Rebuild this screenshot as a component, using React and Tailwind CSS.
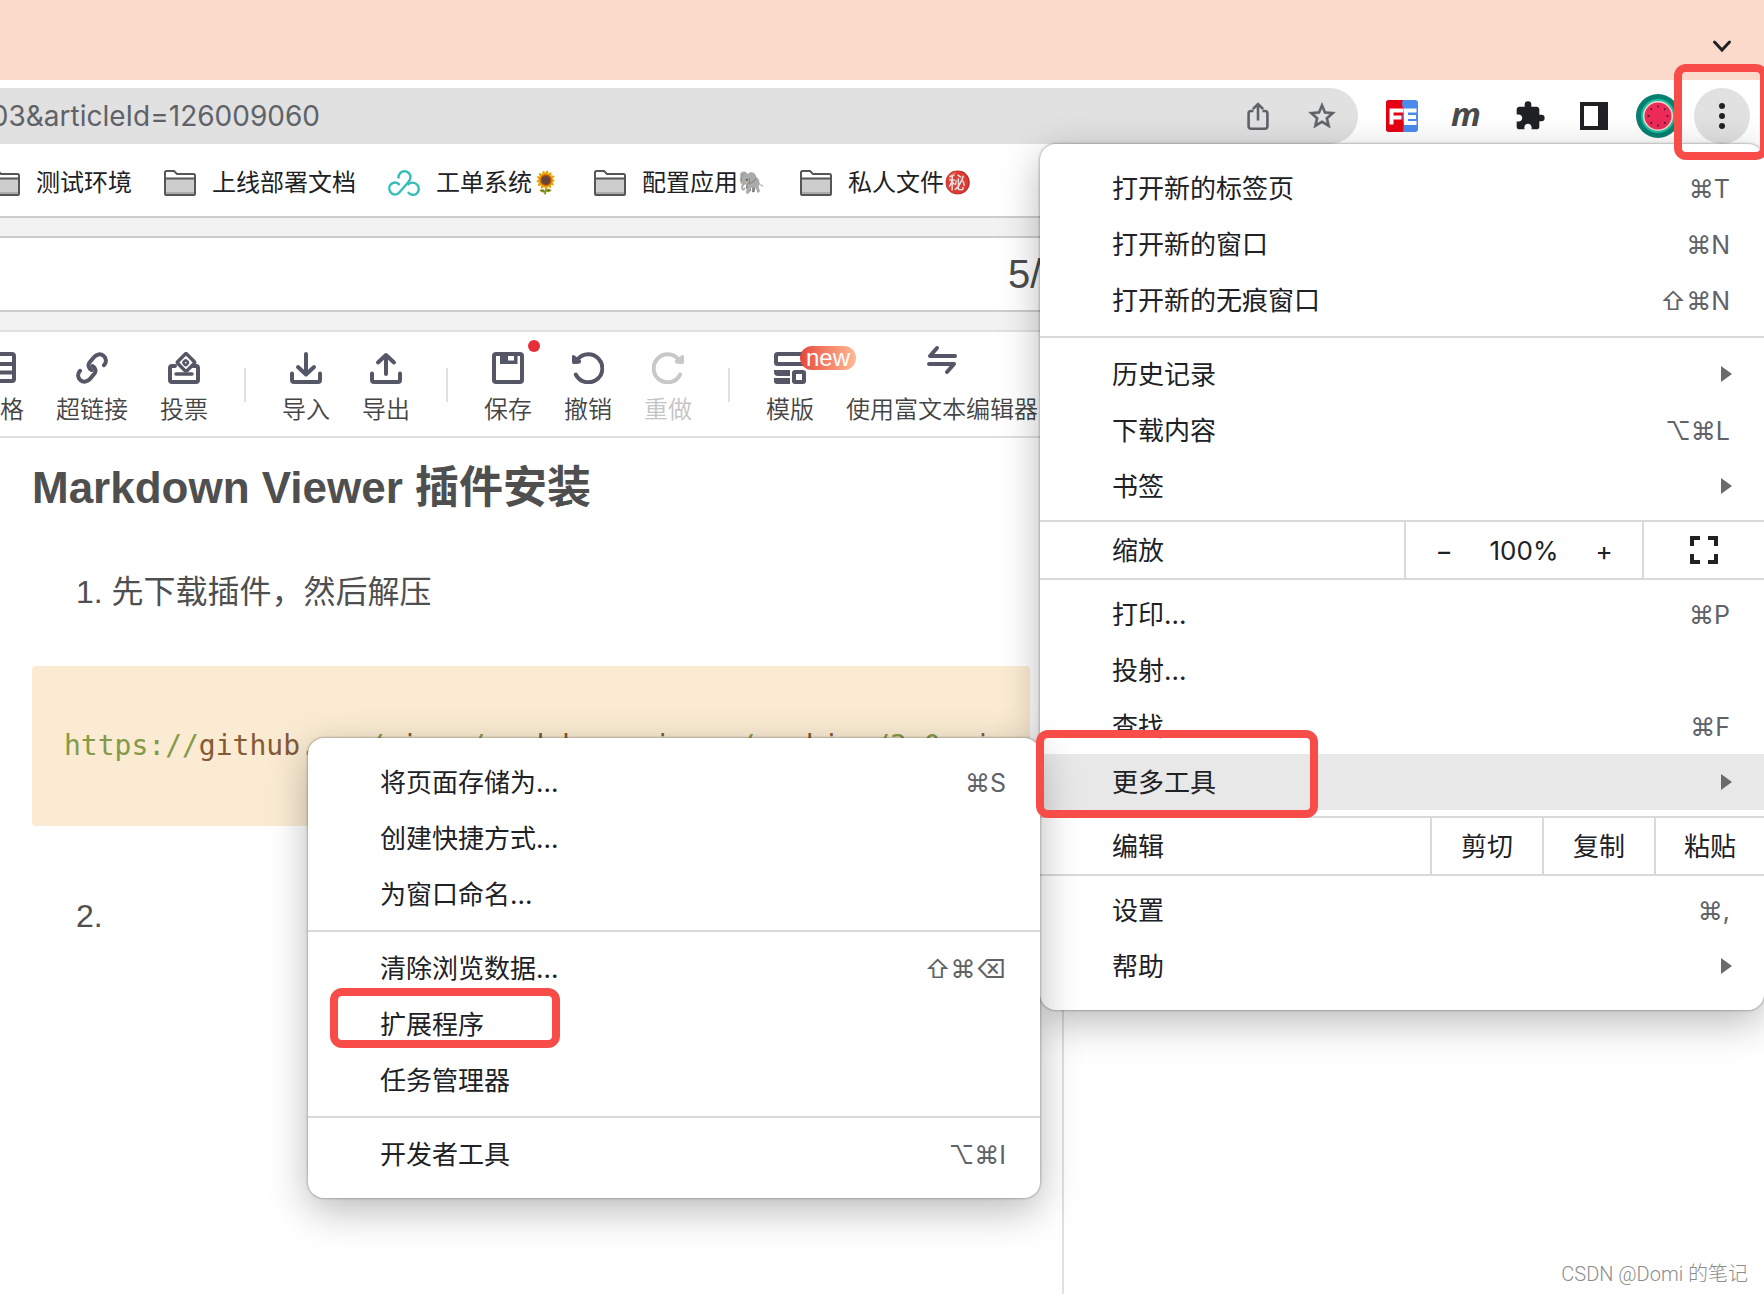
import React from "react";

const ui = "font-['Inter','Noto_Sans_CJK_SC',sans-serif]";
const article = "font-['Liberation_Sans','Noto_Sans_CJK_SC',sans-serif]";

/* ---------- browser icons ---------- */

function ShareIcon() {
  return (
    <svg viewBox="0 0 32 32" className="size-8" fill="none" stroke="currentColor" strokeWidth="2.6">
      <path d="M11.5 11H9a2.4 2.4 0 0 0-2.4 2.4v13A2.4 2.4 0 0 0 9 28.8h14a2.4 2.4 0 0 0 2.4-2.4v-13A2.4 2.4 0 0 0 23 11h-2.500" />
      <path d="M16 20.500V4.500M10.800 9.200L16 4l5.200 5.200" />
    </svg>
  );
}

function StarIcon() {
  return (
    <svg viewBox="0 0 24 24" className="size-8" fill="currentColor" stroke="currentColor" strokeWidth="0.4">
      <path d="M22 9.240l-7.190-.62L12 2 9.190 8.630 2 9.240l5.460 4.730L5.820 21 12 17.270 18.180 21l-1.630-7.030L22 9.240zM12 15.400l-3.760 2.270 1-4.280-3.320-2.880 4.380-.38L12 6.100l1.710 4.040 4.380.38-3.320 2.880 1 4.280L12 15.400z" />
    </svg>
  );
}

function FeIcon() {
  return (
    <svg viewBox="0 0 32 32" className="size-8">
      <rect width="32" height="32" rx="3" fill="#4a8bec" />
      <path d="M3 0h14c-3 5 2 8 0 13s2 9 0 19H3a3 3 0 0 1-3-3V3a3 3 0 0 1 3-3z" fill="#e60012" />
      <path d="M5.500 24.500V10.500h12M5.500 17.500h10M30.500 10.500H20v12.500h10.500M20 17h10" fill="none" stroke="#fff" strokeWidth="4" />
    </svg>
  );
}

function PuzzleIcon() {
  return (
    <svg viewBox="0 0 24 24" className="size-8" fill="#202124">
      <path d="M20.500 11H19V7c0-1.100-.9-2-2-2h-4V3.500a2.500 2.500 0 0 0-5 0V5H4c-1.100 0-1.990.9-1.990 2v3.800H3.500c1.490 0 2.700 1.210 2.700 2.700s-1.210 2.700-2.700 2.700H2V20c0 1.100.9 2 2 2h3.800v-1.500c0-1.490 1.210-2.700 2.700-2.700 1.490 0 2.700 1.210 2.700 2.700V22H17c1.100 0 2-.9 2-2v-4h1.500a2.500 2.500 0 0 0 0-5z" />
    </svg>
  );
}

function SidePanelIcon() {
  return (
    <svg viewBox="0 0 32 32" className="size-8">
      <path d="M2 2h28v28H2z" fill="#202124" />
      <path d="M6 6h14v20H6z" fill="#fff" />
    </svg>
  );
}

function Watermelon() {
  const seeds = [0, 45, 90, 135, 180, 225, 270, 315];
  return (
    <svg viewBox="0 0 44 44" className="size-11">
      <circle cx="22" cy="22" r="22" fill="#078071" />
      <circle cx="22" cy="22" r="17" fill="#1cc09f" />
      <circle cx="22" cy="22" r="15" fill="#f6d3d0" />
      <circle cx="22" cy="22" r="13.500" fill="#ee2a58" />
      {seeds.map((a) => (
        <circle key={a} cx="22" cy="12.500" r="1" fill="#40202a" transform={`rotate(${a} 22 22)`} />
      ))}
    </svg>
  );
}

function Folder() {
  return (
    <svg viewBox="0 0 32 26" className="h-[26px] w-8 shrink-0">
      <path d="M1 24V2.500Q1 1 2.500 1H10l3 3h17.500V24q0 1-1 1H2q-1 0-1-1z" fill="#fff" />
      <path d="M1 8.500h30V25H1z" fill="#cdcdcd" />
      <path d="M2 22h28v2H2z" fill="#ababab" />
      <path d="M1 24V2.500Q1 1 2.500 1H10l3 3h16.500Q31 4 31 5.500V24q0 1-1 1H2q-1 0-1-1zM1 8.500h30" fill="none" stroke="#565656" strokeWidth="2" />
    </svg>
  );
}

function Cloud() {
  return (
    <svg viewBox="0 0 32 26" className="h-[26px] w-8 shrink-0" fill="none" stroke="#35bdb8" strokeWidth="2.400" strokeLinecap="round">
      <path d="M10.500 7.500C10.500 4 13 1.300 16.500 1.300S22.500 4 22.500 7.200c0 2.300-1 3.600-2.500 5.300l-8.500 9.800C9 25.500 5 25.300 2.800 22.500.6 19.600.9 16 3.200 14c2.600-2.300 6-1.900 7.800.3" />
      <path d="M20.500 14.300c2.200-2.400 6.300-2.200 8.700.4 2.200 2.600 2.100 6.400-.3 8.600-2.500 2.200-6.200 2-8.400-.5" />
    </svg>
  );
}

/* ---------- editor icons ---------- */

function ToolSvg({ children, tall }) {
  return (
    <svg
      viewBox={tall ? "0 0 32 40" : "0 0 32 32"}
      className={tall ? "h-10 w-8" : "size-8"}
      fill="none"
      stroke="currentColor"
      strokeWidth="4"
      strokeLinecap="round"
      strokeLinejoin="round"
    >
      {children}
    </svg>
  );
}

const TableIcon = () => (
  <ToolSvg>
    <rect x="2" y="2" width="28" height="27" rx="2" />
    <path d="M2 12h28M2 20.500h28M12 12v17" />
  </ToolSvg>
);
const LinkIcon = () => (
  <ToolSvg>
    <path d="M15.500 18c-3-1.500-4-5-1.800-7.800l4.200-5C20.200 2.200 24.500 1.300 27.500 3.800s3.200 6.500.5 9.400" />
    <path d="M15.500 18c-3-1.500-4-5-1.800-7.800l4.200-5C20.200 2.200 24.500 1.300 27.500 3.800s3.200 6.500.5 9.400" transform="rotate(180 16 16)" />
  </ToolSvg>
);
const VoteIcon = () => (
  <ToolSvg>
    <path d="M7 14H4a2 2 0 0 0-2 2v12a2 2 0 0 0 2 2h24a2 2 0 0 0 2-2V16a2 2 0 0 0-2-2h-3" />
    <rect x="11.500" y="4" width="13" height="13" rx="1.500" transform="rotate(45 18 10.500)" fill="#fff" strokeWidth="3.500" />
    <rect x="15.700" y="8.700" width="4" height="4" rx="1" transform="rotate(45 17.700 10.700)" strokeWidth="2.500" />
    <path d="M8 22h16" strokeWidth="3.500" />
  </ToolSvg>
);
const ImportIcon = () => (
  <ToolSvg>
    <path d="M16 2v20M8 15l8 7.500 8-7.500M2 21.500V28a2 2 0 0 0 2 2h24a2 2 0 0 0 2-2v-6.500" />
  </ToolSvg>
);
const ExportIcon = () => (
  <ToolSvg>
    <path d="M16 22V3.500M8 10.500L16 3l8 7.500M2 21.500V28a2 2 0 0 0 2 2h24a2 2 0 0 0 2-2v-6.500" />
  </ToolSvg>
);
const SaveIcon = () => (
  <ToolSvg>
    <rect x="2" y="2" width="28" height="28" rx="2" />
    <path d="M8 1h17.500v11H8z" fill="currentColor" stroke="none" />
    <path d="M16 4h6v4.500h-6z" fill="#fff" stroke="none" />
  </ToolSvg>
);
const undoShape = (
  <>
    <path d="M3.800 22.500A14 14 0 1 0 5.500 7.500" />
    <path d="M0 4.500C0 3 1.500 2.500 2.500 3.500L8 7.500c2 1.500 1 4-1 4.200L2 12C.8 12 0 11.500 0 10z" fill="currentColor" stroke="none" />
  </>
);
const UndoIcon = () => <ToolSvg>{undoShape}</ToolSvg>;
const RedoIcon = () => (
  <ToolSvg>
    <g transform="matrix(-1 0 0 1 32 0)">{undoShape}</g>
  </ToolSvg>
);
const TemplateIcon = () => (
  <ToolSvg>
    <rect x="2" y="2" width="28" height="10" rx="1.500" />
    <path d="M0 18h16v6H4q-4 0-4-4zM0 26h16v6H3q-3 0-3-3z" fill="currentColor" stroke="none" />
    <rect x="20" y="20" width="10" height="10" rx="1" />
  </ToolSvg>
);
const SwapIcon = () => (
  <ToolSvg tall>
    <path d="M29 12H4l7-8M3 20h25l-7 8" />
  </ToolSvg>
);

/* ---------- pieces ---------- */

function Frame({ className }) {
  return <span aria-hidden="true" className={`pointer-events-none absolute rounded-xl border-8 border-[#f74c47] ${className}`} />;
}

function Bookmark({ icon, label, emoji }) {
  return (
    <a href="#bookmark" className="flex shrink-0 items-center gap-4">
      {icon}
      <span className="flex items-center whitespace-nowrap">
        {label}
        {emoji && <span className="w-[30px] text-[22px] brightness-90">{emoji}</span>}
      </span>
    </a>
  );
}

function Tool({ icon, label, disabled, children }) {
  return (
    <button
      type="button"
      disabled={disabled}
      className={`relative flex shrink-0 flex-col items-center gap-[10px] ${disabled ? "text-[#c8c8cb]" : "text-[#555666]"}`}
    >
      {icon}
      <span className={`text-2xl/8 font-[350] whitespace-nowrap ${disabled ? "text-[#c4c4c4]" : "text-[#444444]"}`}>{label}</span>
      {children}
    </button>
  );
}

const Divider = () => <span className="mx-1 mb-6 h-[34px] w-[2px] shrink-0 bg-[#e0e0e0]" />;

function Item({ label, keys, arrow, active, children }) {
  return (
    <div className="relative">
      <button
        type="button"
        role="menuitem"
        className={`flex h-14 w-full items-center justify-between pr-8 pl-[72px] text-left ${active ? "bg-[#e8e8e8]" : ""}`}
      >
        <span>{label}</span>
        {keys && <span className="pt-[3px] pr-[2px] font-['Inter','DejaVu_Sans',sans-serif] text-[25px] text-[#5f6368]">{keys}</span>}
        {arrow && (
          <svg viewBox="0 0 12 16" className="h-4 w-3" fill="#6b6b6b">
            <path d="M1 0l11 8-11 8z" />
          </svg>
        )}
      </button>
      {children}
    </div>
  );
}

const Rule = () => <hr className="my-2 border-0 border-t-2 border-[#d9d9d9]" />;

const panel =
  "rounded-2xl bg-white py-4 text-[26px] text-[#202124] shadow-[0_12px_40px_rgba(0,0,0,0.28),0_0_2px_1px_rgba(0,0,0,0.22)]";

function MoreToolsMenu() {
  return (
    <div role="menu" aria-label="更多工具" className={`absolute -top-4 right-full w-[732px] ${panel}`}>
      <Item label="将页面存储为..." keys="⌘S" />
      <Item label="创建快捷方式..." />
      <Item label="为窗口命名..." />
      <Rule />
      <Item label="清除浏览数据..." keys="⇧⌘⌫" />
      <Item label="扩展程序">
        <Frame className="-top-2 left-[22px] h-[60px] w-[230px]" />
      </Item>
      <Item label="任务管理器" />
      <Rule />
      <Item label="开发者工具" keys="⌥⌘I" />
    </div>
  );
}

function MainMenu() {
  const cell = "border-l-2 border-[#d9d9d9] flex items-center justify-center";
  const row = "my-[6px] flex h-[60px] border-y-2 border-[#d9d9d9] pl-[72px]";
  return (
    <div role="menu" aria-label="菜单" className={`absolute top-36 right-0 z-20 w-[724px] ${panel}`}>
      <Item label="打开新的标签页" keys="⌘T" />
      <Item label="打开新的窗口" keys="⌘N" />
      <Item label="打开新的无痕窗口" keys="⇧⌘N" />
      <Rule />
      <Item label="历史记录" arrow />
      <Item label="下载内容" keys="⌥⌘L" />
      <Item label="书签" arrow />
      <div className={row}>
        <span className="flex flex-1 items-center">缩放</span>
        <div className={`${cell} w-[238px]`}>
          <button type="button" aria-label="缩小" className="w-12">−</button>
          <span className="w-28 text-center">100%</span>
          <button type="button" aria-label="放大" className="w-12">+</button>
        </div>
        <button type="button" aria-label="全屏" className={`${cell} w-[122px]`}>
          <svg viewBox="0 0 28 28" className="size-7" fill="none" stroke="#202124" strokeWidth="4">
            <path d="M2 10V2h8M18 2h8v8M26 18v8h-8M10 26H2v-8" />
          </svg>
        </button>
      </div>
      <Item label="打印..." keys="⌘P" />
      <Item label="投射..." />
      <Item label="查找..." keys="⌘F" />
      <Item label="更多工具" arrow active>
        <MoreToolsMenu />
        <Frame className="-top-6 -left-1 h-[88px] w-[282px]" />
      </Item>
      <div className={row}>
        <span className="flex flex-1 items-center">编辑</span>
        <button type="button" className={`${cell} w-28`}>剪切</button>
        <button type="button" className={`${cell} w-28`}>复制</button>
        <button type="button" className={`${cell} w-[110px]`}>粘贴</button>
      </div>
      <Item label="设置" keys="⌘," />
      <Item label="帮助" arrow />
    </div>
  );
}

export default function App() {
  return (
    <div lang="zh-CN" className={`relative flex min-h-screen flex-col overflow-hidden bg-white ${ui}`}>
      <header className="flex h-20 items-center justify-end bg-[#fbdacb] pt-3 pr-[30px]">
        <button type="button" aria-label="搜索标签页">
          <svg viewBox="0 0 24 24" className="size-6" fill="none" stroke="#202124" strokeWidth="3" strokeLinecap="round">
            <path d="M4.500 8l7.500 8 7.500-8" />
          </svg>
        </button>
      </header>

      <div className="flex h-16 items-end pr-[14px]">
        <div className="flex h-14 flex-1 items-center gap-8 rounded-r-full bg-[#e1e1e1] pr-5 text-[#5f6368]">
          <div className="flex w-80 justify-end overflow-hidden text-[28px] whitespace-nowrap">03&amp;articleId=126009060</div>
          <button type="button" aria-label="分享" className="ml-auto"><ShareIcon /></button>
          <button type="button" aria-label="收藏"><StarIcon /></button>
        </div>
        <div className="flex h-14 items-center gap-8 pl-7">
          <button type="button" aria-label="FeHelper"><FeIcon /></button>
          <button type="button" className="w-8 pb-1 font-['Open_Sans',sans-serif] text-[33px]/8 font-bold text-[#4a4a4a] italic">m</button>
          <button type="button" aria-label="扩展程序"><PuzzleIcon /></button>
          <button type="button" aria-label="侧边栏"><SidePanelIcon /></button>
        </div>
        <button type="button" aria-label="个人资料" className="mb-[6px] ml-[26px]"><Watermelon /></button>
        <div className="relative ml-[14px] size-14">
          <button type="button" aria-label="更多" className="flex size-14 items-center justify-center rounded-full bg-[#e1e1e1]">
            <svg viewBox="0 0 8 28" className="h-7 w-2" fill="#202124">
              <circle cx="4" cy="4" r="3" />
              <circle cx="4" cy="14" r="3" />
              <circle cx="4" cy="24" r="3" />
            </svg>
          </button>
          <Frame className="-top-6 -left-5 z-30 h-24 w-[94px]" />
        </div>
      </div>

      <nav className="-ml-3 flex h-[74px] items-center gap-8 border-b-2 border-[#cccccc] pt-[6px] text-2xl text-[#202124]">
        <Bookmark icon={<Folder />} label="测试环境" />
        <Bookmark icon={<Folder />} label="上线部署文档" />
        <Bookmark icon={<Cloud />} label="工单系统" emoji="🌻" />
        <Bookmark icon={<Folder />} label="配置应用" emoji="🐘" />
        <Bookmark icon={<Folder />} label="私人文件" emoji="㊙️" />
      </nav>

      <div className="bg-[#f2f2f2] py-[18px]">
        <div className={`flex h-[76px] items-center border-y-2 border-[#cccccc] bg-white text-[40px] text-[#4d4d4d] ${article}`}>
          <input aria-label="文章标题" className="h-full w-[1008px] shrink-0 outline-none" />
          <span>5/100</span>
        </div>
      </div>

      <div className="-ml-6 flex h-[108px] items-end gap-8 border-y-2 border-[#e0e0e0] pb-[10px]">
        <Tool icon={<TableIcon />} label="表格" />
        <Tool icon={<LinkIcon />} label="超链接" />
        <Tool icon={<VoteIcon />} label="投票" />
        <Divider />
        <Tool icon={<ImportIcon />} label="导入" />
        <Tool icon={<ExportIcon />} label="导出" />
        <Divider />
        <Tool icon={<SaveIcon />} label="保存">
          <span className="absolute -top-3 -right-2 size-3 rounded-full bg-[#e62d38]" />
        </Tool>
        <Tool icon={<UndoIcon />} label="撤销" />
        <Tool icon={<RedoIcon />} label="重做" disabled />
        <Divider />
        <Tool icon={<TemplateIcon />} label="模版">
          <span className="absolute -top-[6px] left-[34px] h-6 w-14 rounded-full bg-linear-to-r from-[#e5453c] to-[#ffb995] text-center font-['Liberation_Sans',sans-serif] text-2xl/6 text-white">
            new
          </span>
        </Tool>
        <Tool icon={<SwapIcon />} label="使用富文本编辑器" />
      </div>

      <main className={`flex flex-1 ${article}`}>
        <section className="w-[60.3%] border-r-2 border-[#e0e0e0] px-8 pt-[18px] text-[#4f4f4f]">
          <h2 className="text-[44px]/[64px] font-bold">Markdown Viewer 插件安装</h2>
          <p className="mt-12 pl-11 text-[32px]/[48px]">1. 先下载插件，然后解压</p>
          <pre className="mt-[50px] overflow-hidden rounded bg-[#faebd2] px-8 py-14 font-['DejaVu_Sans_Mono',monospace] text-[28px]/[48px] text-[#855a36]">
            <span className="text-[#859a48]">https://</span>github<span className="text-[#999999]">.</span>com
            <span className="text-[#859a48]">/</span>simov<span className="text-[#859a48]">/</span>markdown
            <span className="text-[#999999]">-</span>viewer<span className="text-[#859a48]">/</span>archive
            <span className="text-[#859a48]">/3.0</span>
            <span className="text-[#999999]">.</span>zip
          </pre>
          <p className="mt-[66px] pl-11 text-[32px]/[48px]">2.</p>
        </section>
        <section className="flex flex-1 items-end justify-end pr-4 pb-[6px]">
          <p className="font-['Roboto','Noto_Sans_CJK_SC',sans-serif] text-xl/7 font-light text-[#8c8c8c]">CSDN @Domi 的笔记</p>
        </section>
      </main>

      <MainMenu />
    </div>
  );
}
